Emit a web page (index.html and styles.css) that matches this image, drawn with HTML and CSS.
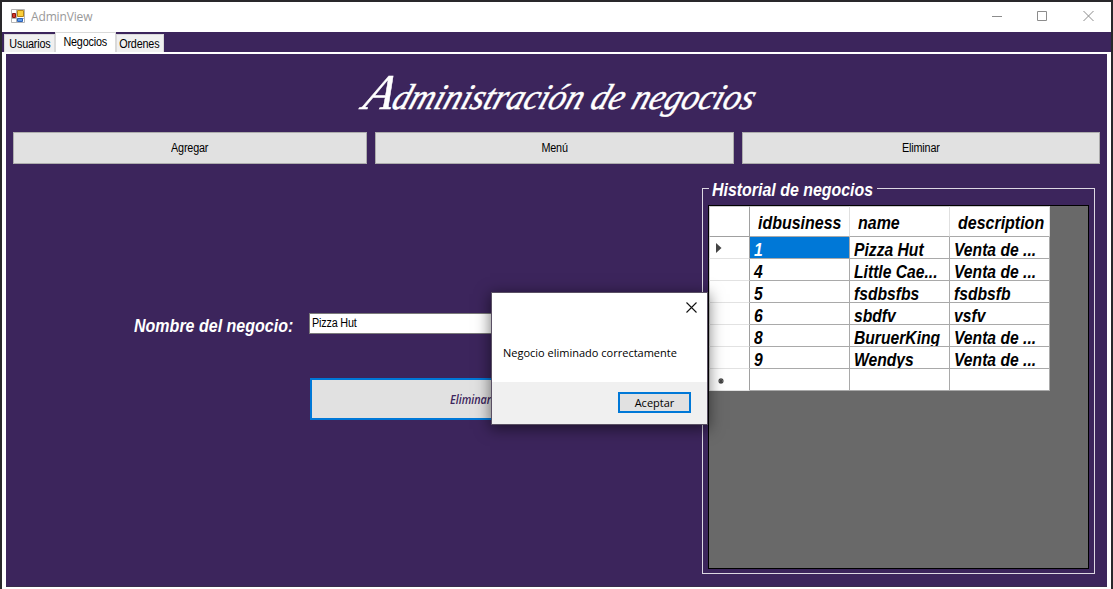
FILE: index.html
```html
<!DOCTYPE html>
<html lang="es">
<head>
<meta charset="utf-8">
<title>AdminView</title>
<link rel="stylesheet" href="styles.css">
</head>
<body>
<div class="window">
  <header class="titlebar">
    <svg class="app-icon" width="15" height="15" viewBox="0 0 15 15">
      <path d="M.5 .5h13v13H.5z" fill="#fff" stroke="#b4b4b4"/>
      <path d="M5.500 .5v13M.5 9.500h13" stroke="#b4b4b4"/>
      <path d="M6.500 1.500h6v6h-6z" fill="#fbcf3b" stroke="#b88714"/>
      <path d="M1.500 4.500h3v4h-3z" fill="#d53a2c" stroke="#8d1610"/>
      <path d="M6.500 9.500h5v3h-5z" fill="#5e9cec" stroke="#2d62b8"/>
    </svg>
    <span class="app-name">AdminView</span>
    <svg class="controls" width="106" height="12" viewBox="0 0 106 12" fill="none" stroke="#8c8c8c">
      <path d="M1 6.500h10M46.500 1.500h9v9h-9zM92.500 1l10 10M102.500 1l-10 10"/>
    </svg>
  </header>
  <nav class="tabs">
    <span class="tab tab-users"><span class="small">Usuarios</span></span>
    <span class="tab tab-active"><span class="small">Negocios</span></span>
    <span class="tab tab-orders"><span class="small">Ordenes</span></span>
  </nav>
  <main class="page">
    <h1 class="title"><span class="title-text">Administración de negocios</span></h1>
    <div class="actions">
      <button class="action"><span class="small">Agregar</span></button>
      <button class="action"><span class="small">Menú</span></button>
      <button class="action"><span class="small">Eliminar</span></button>
    </div>
    <div class="content">
      <form class="form">
        <div class="field">
          <label class="label"><span class="narrow">Nombre del negocio:</span></label>
          <div class="input"><span class="small">Pizza Hut</span></div>
        </div>
        <div class="submit"><span class="submit-text">Eliminar</span></div>
      </form>
      <section class="group">
        <h2 class="legend"><span class="narrow">Historial de negocios</span></h2>
        <div class="grid-box">
          <div class="grid">
            <div class="cell head side"></div><div class="cell head"><span class="narrow">idbusiness</span></div><div class="cell head"><span class="narrow">name</span></div><div class="cell head"><span class="narrow">description</span></div>
            <div class="cell side"><svg width="6" height="10" viewBox="0 0 6 10"><path d="M0 0l5.500 5L0 10z" fill="#444"/></svg></div><div class="cell selected"><span class="narrow">1</span></div><div class="cell"><span class="narrow">Pizza Hut</span></div><div class="cell"><span class="narrow">Venta de ...</span></div>
            <div class="cell side"></div><div class="cell"><span class="narrow">4</span></div><div class="cell"><span class="narrow">Little Cae...</span></div><div class="cell"><span class="narrow">Venta de ...</span></div>
            <div class="cell side"></div><div class="cell"><span class="narrow">5</span></div><div class="cell"><span class="narrow">fsdbsfbs</span></div><div class="cell"><span class="narrow">fsdbsfb</span></div>
            <div class="cell side"></div><div class="cell"><span class="narrow">6</span></div><div class="cell"><span class="narrow">sbdfv</span></div><div class="cell"><span class="narrow">vsfv</span></div>
            <div class="cell side"></div><div class="cell"><span class="narrow">8</span></div><div class="cell"><span class="narrow">BuruerKing</span></div><div class="cell"><span class="narrow">Venta de ...</span></div>
            <div class="cell side"></div><div class="cell"><span class="narrow">9</span></div><div class="cell"><span class="narrow">Wendys</span></div><div class="cell"><span class="narrow">Venta de ...</span></div>
            <div class="cell side new-row"><svg width="6" height="6" viewBox="0 0 6 6"><path d="M3 0v6M0 3h6M1 1l4 4M5 1L1 5" stroke="#444" stroke-width="1.200"/></svg></div><div class="cell"></div><div class="cell"></div><div class="cell"></div>
          </div>
        </div>
      </section>
    </div>
  </main>
</div>
<div class="dialog">
  <svg class="dialog-close" width="11" height="11" viewBox="0 0 11 11"><path d="M.5.5l10 10M10.500.5l-10 10" stroke="#111" stroke-width="1.100"/></svg>
  <div class="dialog-body"><span class="message">Negocio eliminado correctamente</span></div>
  <div class="dialog-footer"><div class="accept"><span class="accept-text">Aceptar</span></div></div>
</div>
</body>
</html>
```
FILE: styles.css
```css
* { box-sizing: border-box; }
body {
  margin: 0;
  width: 1113px;
  height: 589px;
  overflow: hidden;
  background: #29282b;
  font-family: "Liberation Sans", Arial, sans-serif;
  padding: 2px 2px 0;
}
.window { height: 587px; background: #3c255c; display: flex; flex-direction: column; }
.titlebar { height: 30px; flex: none; background: #fff; display: flex; align-items: center; padding: 0 14px 2px 9px; }
.app-name { font: 12px/16px "Open Sans", sans-serif; color: #999; margin: 1px 0 0 5px; letter-spacing: -0.15px; flex: 1; }
.tabs { height: 20px; flex: none; display: flex; align-items: flex-end; padding-left: 2px; }
.tab { height: 18px; background: #f0f0f0; border: 1px solid #d9d9d9; border-bottom: 0; display: flex; align-items: center; justify-content: center; }
.tab-users { width: 51px; }
.tab-active { width: 61px; height: 20px; background: #fff; padding-bottom: 1px; }
.tab-orders { width: 48px; padding-right: 2px; }
.small { display: inline-block; font-size: 12px; line-height: 14px; letter-spacing: -0.2px; color: #000; white-space: nowrap; transform: scaleX(.9); }
.page { flex: 1; border: solid #fff; border-width: 2px 4px 2px; background: #3c255c; box-shadow: inset 0 -1px #382d4b; display: flex; flex-direction: column; }
.title { margin: 0; height: 78px; flex: none; text-align: center; font-weight: 400; padding: 15px 0 0 10px; }
.title-text { display: inline-block; font: italic 400 36px/46px "Liberation Serif", serif; color: #fff; white-space: nowrap; transform: scaleX(.95) skewX(-20deg); -webkit-text-stroke: .5px #fff; }
.title-text::first-letter { font-size: 50px; }
.actions { display: grid; grid-template-columns: 354px 359px 358px; gap: 8px; padding-left: 7px; height: 32px; flex: none; }
.action { background: #e1e1e1; border: 1px solid #adadad; padding: 0; font-family: inherit; display: flex; align-items: center; justify-content: center; }
.content { flex: 1; display: flex; }
.form { width: 696px; flex: none; padding: 149px 0 0 128px; }
.field { display: flex; align-items: flex-start; height: 22px; }
.narrow { display: inline-block; font-style: italic; font-weight: 700; font-size: 18px; line-height: 22px; white-space: nowrap; transform: scaleX(.87); transform-origin: 0 0; }
.label { width: 175px; color: #fff; padding-top: 2px; }
.label .narrow { transform: scaleX(.89); }
.input { width: 300px; height: 21px; background: #fff; border: 1px solid #7a7a7a; padding: 0 0 2px 2px; display: flex; align-items: center; }
.input .small { transform-origin: 0 0; }
.submit { width: 330px; height: 42px; margin: 43px 0 0 176px; background: #e1e1e1; border: 2px solid #0078d7; display: flex; align-items: center; padding: 2px 0 0 138px; }
.submit-text { font: italic 600 12px/16px "Open Sans", sans-serif; color: #3c255c; transform: scaleX(.9); transform-origin: 0 0; }
.group { width: 393px; height: 386px; flex: none; margin-top: 24px; border: 1px solid #dcd7e2; padding: 0 5px; }
.legend { margin: -11px 0 0 1px; width: 168px; height: 22px; background: #3c255c; padding: 1px 0 0 3px; font-size: 18px; color: #fff; }
.legend .narrow { transform: scaleX(.885); }
.grid-box { width: 381px; height: 364px; margin-top: 5px; border: 1px solid #000; background: #696969; }
.grid { width: 341px; display: grid; grid-template-columns: 41px 100px 100px 100px; grid-template-rows: 31px repeat(7, 22px); }
.cell { border: solid #a9a9a9; border-width: 0 1px 1px 0; background: #fff; color: #000; padding: 2px 0 0 4px; overflow: hidden; height: 100%; font-size: 0; }
.cell .narrow { line-height: 22px; }
.cell.head .narrow { transform: scaleX(.888); }
.head { border-right-color: #e0e0e0; border-top: 1px solid #ccc; padding: 5px 0 0 8px; }
.side { border-right-color: #a0a0a0; border-bottom-color: #e2e2e2; border-left: 1px solid #d0d0d0; padding: 0 0 0 6px; display: flex; align-items: center; }
.head.side { border-bottom-color: #a0a0a0; }
.new-row { padding: 2px 0 0 8px; }
.selected { background: #0078d7; color: #fff; }
.dialog { position: absolute; left: 491px; top: 292px; width: 217px; height: 133px; border: 1px solid #5a5064; background: #fff; box-shadow: 0 3px 14px 1px rgba(0, 0, 0, .5); display: flex; flex-direction: column; }
.dialog-close { position: absolute; left: 194px; top: 9px; }
.dialog-body { height: 89px; padding: 52px 0 0 11px; }
.message, .accept-text { font: 11px/16px "Open Sans", sans-serif; display: block; white-space: nowrap; color: #000; }
.dialog-footer { flex: 1; background: #f0f0f0; padding: 10px 0 0 126px; }
.accept { width: 73px; height: 21px; border: 2px solid #0078d7; background: #e1e1e1; display: flex; align-items: center; justify-content: center; }
```
